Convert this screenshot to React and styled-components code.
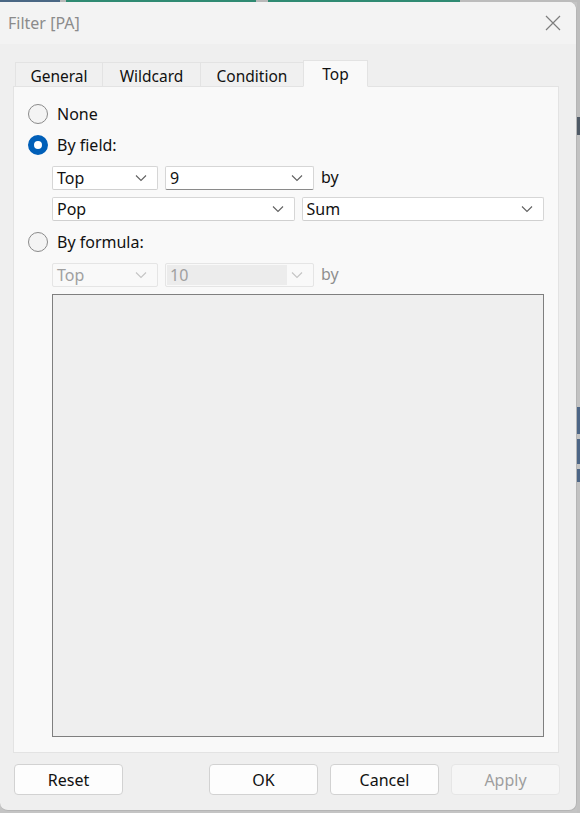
import React from "react"
import styled, { createGlobalStyle } from "styled-components"

const GlobalStyle = createGlobalStyle`
  html, body {
    margin: 0;
    padding: 0;
    width: 580px;
    height: 813px;
    overflow: hidden;
    background: #c4c4c4;
  }
  * {
    box-sizing: border-box;
  }
`

const font = `"Segoe UI", "Noto Sans", "Open Sans", sans-serif`

const topStrip = [
  { w: 60, c: "#4a6784" },
  { w: 6, c: "#b8b8b8" },
  { w: 190, c: "#2f8a72" },
  { w: 12, c: "#b8b8b8" },
  { w: 192, c: "#2f8a72" },
  { w: 120, c: "#bcbcbc" },
]

const sideStrip = [
  { h: 115, c: "#bdbdbd" },
  { h: 18, c: "#4f5a66" },
  { h: 272, c: "#c2c2c2" },
  { h: 27, c: "#4d6686" },
  { h: 5, c: "#c2c2c2" },
  { h: 25, c: "#4d6686" },
  { h: 5, c: "#c2c2c2" },
  { h: 13, c: "#4d6686" },
  { h: 333, c: "#c2c2c2" },
]

const tabs = [
  { label: "General", w: 88 },
  { label: "Wildcard", w: 99 },
  { label: "Condition", w: 104 },
  { label: "Top", w: 65, active: true },
]

const App = () => {
  return (
    <>
      <GlobalStyle />
      <Desktop>
        <Strip>
          {topStrip.map((s, i) => (
            <StripBit key={i} style={{ width: s.w, background: s.c }} />
          ))}
        </Strip>
        <Main>
          <Window>
            <TitleBar>
              <Title>Filter [PA]</Title>
              <CloseButton aria-label="Close">
                <svg width="16" height="16" viewBox="0 0 16 16">
                  <path d="M1 1 L15 15 M15 1 L1 15" stroke="#7d7d7d" strokeWidth="1.2" fill="none" />
                </svg>
              </CloseButton>
            </TitleBar>
            <Body>
              <TabList>
                {tabs.map(t => (
                  <Tab key={t.label} $w={t.w} $active={t.active}>
                    {t.label}
                  </Tab>
                ))}
              </TabList>
              <Panel>
                <RadioRow>
                  <Radio />
                  <RadioLabel>None</RadioLabel>
                </RadioRow>
                <RadioRow>
                  <Radio $checked />
                  <RadioLabel>By field:</RadioLabel>
                </RadioRow>
                <Indent>
                  <SelectRow>
                    <Select $w={106} value="Top" />
                    <Select $w={149} value="9" $focus />
                    <By>by</By>
                  </SelectRow>
                  <PairRow>
                    <Select value="Pop" />
                    <Select value="Sum" />
                  </PairRow>
                </Indent>
                <RadioRow>
                  <Radio />
                  <RadioLabel>By formula:</RadioLabel>
                </RadioRow>
                <Indent $grow>
                  <SelectRow>
                    <Select $w={106} value="Top" disabled />
                    <Select $w={149} value="10" disabled $field />
                    <By $disabled>by</By>
                  </SelectRow>
                  <FormulaBox />
                </Indent>
              </Panel>
            </Body>
            <Footer>
              <Button>Reset</Button>
              <Spacer />
              <Button>OK</Button>
              <Button>Cancel</Button>
              <Button disabled>Apply</Button>
            </Footer>
          </Window>
          <Side>
            {sideStrip.map((s, i) => (
              <SideBit key={i} style={{ height: s.h, background: s.c }} />
            ))}
          </Side>
        </Main>
      </Desktop>
    </>
  )
}

const Chevron = ({ color }) => (
  <svg width="12" height="8" viewBox="0 0 12 8">
    <path d="M1 1.5 L6 6.5 L11 1.5" stroke={color} strokeWidth="1.1" fill="none" />
  </svg>
)

const Select = ({ value, disabled, $w, $focus, $field }) => (
  <SelectBox $w={$w} $disabled={disabled} $focus={$focus}>
    <SelectValue $disabled={disabled} $field={$field}>
      {value}
    </SelectValue>
    <ChevronWrap>
      <Chevron color={disabled ? "#c4c4c4" : "#606060"} />
    </ChevronWrap>
  </SelectBox>
)

const Desktop = styled.div`
  width: 580px;
  height: 813px;
  display: flex;
  flex-direction: column;
  font-family: ${font};
`

const Strip = styled.div`
  height: 2px;
  display: flex;
`

const StripBit = styled.div`
  height: 2px;
`

const Main = styled.div`
  flex: 1;
  display: flex;
`

const Side = styled.div`
  width: 3px;
  display: flex;
  flex-direction: column;
`

const SideBit = styled.div`
  width: 3px;
`

const Window = styled.div`
  width: 577px;
  height: 809px;
  flex-shrink: 0;
  display: flex;
  flex-direction: column;
  background: #efefef;
  border-right: 1px solid #b5b5b5;
  border-bottom: 1px solid #b5b5b5;
  border-radius: 0 8px 8px 8px;
  overflow: hidden;
`

const TitleBar = styled.div`
  height: 42px;
  display: flex;
  align-items: center;
  justify-content: space-between;
  background: #f3f3f3;
  padding: 0 15px 0 8px;
`

const Title = styled.div`
  font-size: 16px;
  color: #8b8b8b;
`

const CloseButton = styled.div`
  width: 16px;
  height: 16px;
  display: flex;
`

const Body = styled.div`
  flex: 1;
  display: flex;
  flex-direction: column;
  padding: 17px 17px 0 13px;
`

const TabList = styled.div`
  display: flex;
  align-items: flex-end;
  padding-left: 2px;
  height: 26px;
  margin-bottom: -1px;
  position: relative;
  z-index: 1;
`

const Tab = styled.div`
  width: ${p => p.$w}px;
  height: ${p => (p.$active ? "27px" : "25px")};
  display: flex;
  align-items: center;
  justify-content: center;
  font-size: 15.5px;
  color: #111;
  background: ${p => (p.$active ? "#f9f9f9" : "#f0f0f0")};
  border: 1px solid #e3e3e3;
  border-bottom: ${p => (p.$active ? "1px solid #f9f9f9" : "1px solid #e3e3e3")};
  margin-left: -1px;
  padding-top: ${p => (p.$active ? "0" : "2px")};

  &:first-child {
    margin-left: 0;
  }
`

const Panel = styled.div`
  flex: 1;
  display: flex;
  flex-direction: column;
  background: #f9f9f9;
  border: 1px solid #e3e3e3;
  padding: 17px 14px 15px 14px;
`

const RadioRow = styled.div`
  display: flex;
  align-items: center;
  gap: 9px;
  height: 20px;
  margin-bottom: 11px;
`

const Radio = styled.div`
  width: 20px;
  height: 20px;
  border-radius: 50%;
  flex-shrink: 0;
  border: ${p => (p.$checked ? "6px solid #005fb8" : "1px solid #8a8a8a")};
  background: ${p => (p.$checked ? "#ffffff" : "#f4f4f4")};
`

const RadioLabel = styled.span`
  font-size: 16px;
  color: #111;
`

const Indent = styled.div`
  margin-left: 24px;
  display: flex;
  flex-direction: column;
  gap: 7px;
  margin-bottom: 11px;
  ${p => (p.$grow ? "flex: 1; margin-bottom: 0;" : "")}
`

const SelectRow = styled.div`
  display: flex;
  align-items: center;
  gap: 7px;
`

const PairRow = styled.div`
  display: grid;
  grid-template-columns: 1fr 1fr;
  gap: 7px;
`

const SelectBox = styled.div`
  ${p => (p.$w ? `width: ${p.$w}px;` : "")}
  height: 24px;
  display: flex;
  align-items: center;
  justify-content: space-between;
  background: ${p => (p.$disabled ? "#f9f9f9" : "#ffffff")};
  border: 1px solid ${p => (p.$disabled ? "#e5e5e5" : "#d6d6d6")};
  border-bottom-color: ${p => (p.$focus ? "#8a8a8a" : p.$disabled ? "#e5e5e5" : "#d0d0d0")};
  border-radius: 2px;
  padding: 1px;
`

const SelectValue = styled.div`
  flex: ${p => (p.$field ? "1" : "none")};
  align-self: stretch;
  display: flex;
  align-items: center;
  padding-left: 3px;
  font-size: 16px;
  color: ${p => (p.$disabled ? "#a0a0a0" : "#111")};
  background: ${p => (p.$field ? "#ececec" : "transparent")};
  margin-right: ${p => (p.$field ? "4px" : "0")};
`

const ChevronWrap = styled.div`
  width: 12px;
  display: flex;
  margin-right: 9px;
`

const By = styled.span`
  font-size: 16px;
  color: ${p => (p.$disabled ? "#8f8f8f" : "#111")};
  margin-bottom: 2px;
`

const FormulaBox = styled.div`
  flex: 1;
  background: #efefef;
  border: 1px solid #7f7f7f;
`

const Footer = styled.div`
  display: flex;
  gap: 12px;
  padding: 11px 0 15px 14px;
`

const Spacer = styled.div`
  width: 62px;
  flex-shrink: 0;
`

const Button = styled.div`
  width: 109px;
  height: 31px;
  flex-shrink: 0;
  display: flex;
  align-items: center;
  justify-content: center;
  font-size: 16px;
  color: ${p => (p.disabled ? "#9e9e9e" : "#111")};
  background: ${p => (p.disabled ? "#f6f6f6" : "#fdfdfd")};
  border: 1px solid ${p => (p.disabled ? "#e6e6e6" : "#d2d2d2")};
  border-radius: 4px;
`

export default App
